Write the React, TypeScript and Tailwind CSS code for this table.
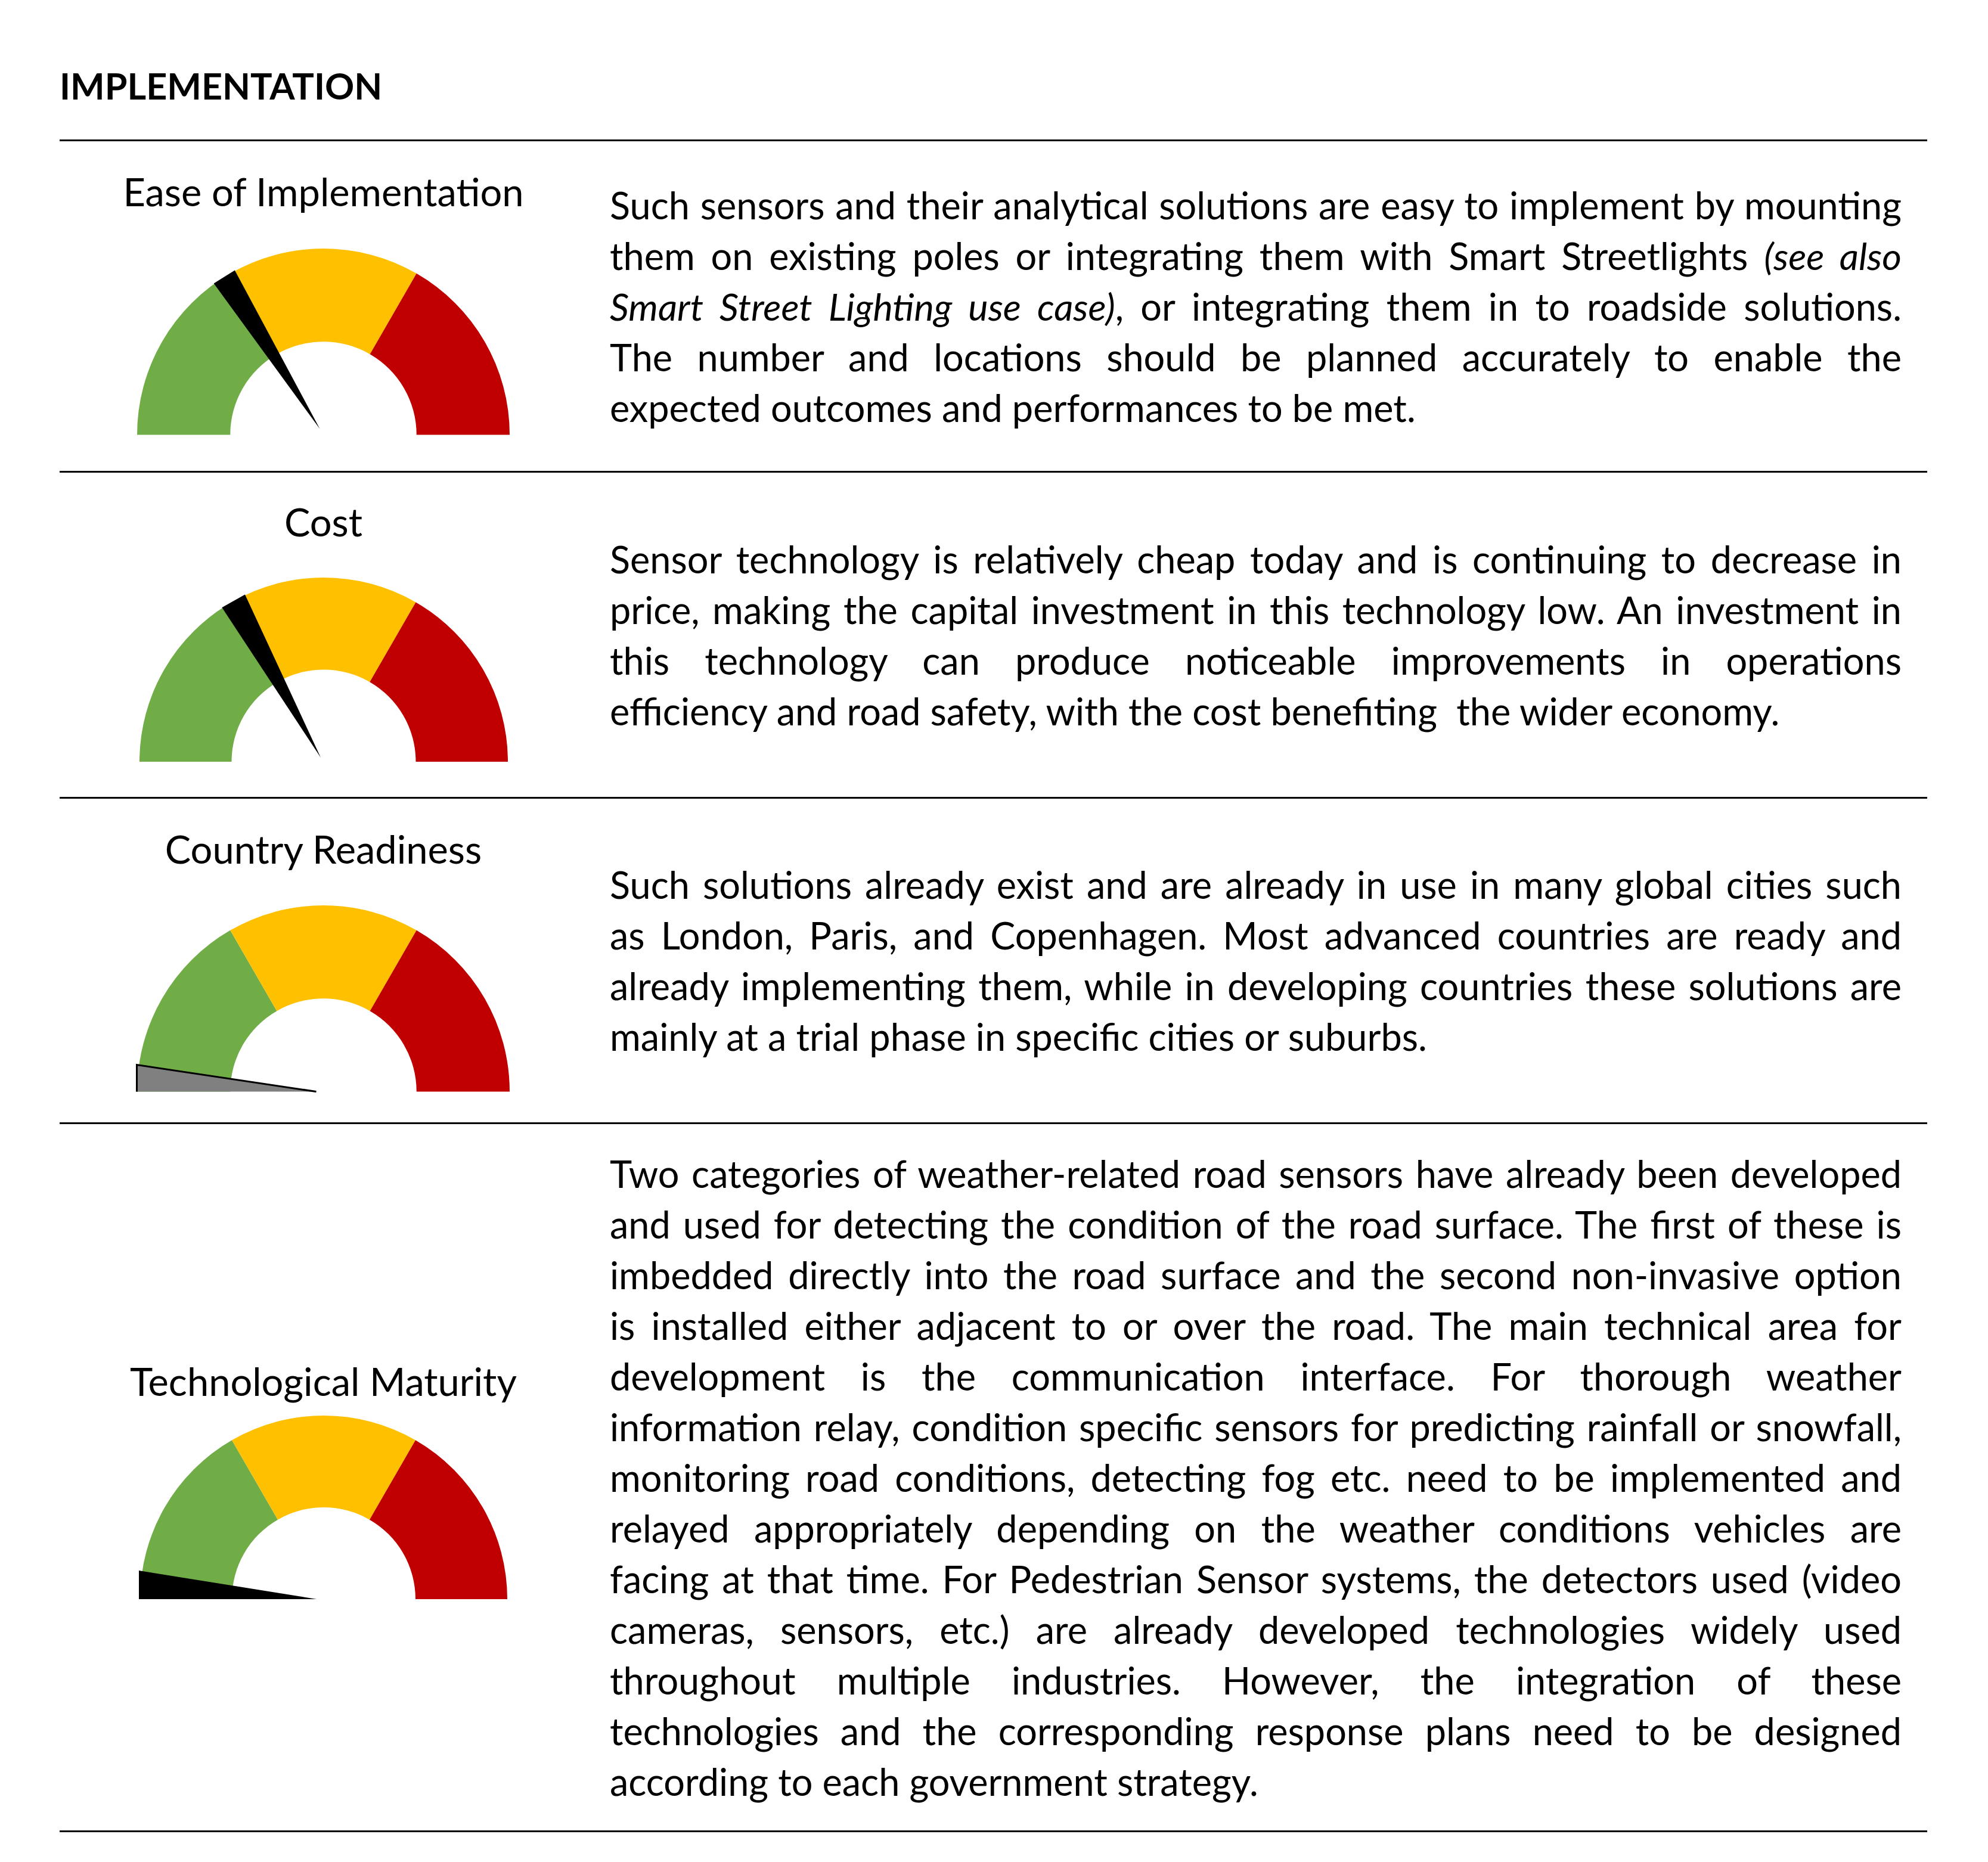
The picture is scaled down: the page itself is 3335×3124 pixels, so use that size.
import React from "react";

type Needle =
  | { kind: "pointer"; a1: number; a2: number; tx: number; ty: number }
  | { kind: "wedge"; h: number; fill: string; stroke?: string };

function pt(cx: number, cy: number, r: number, deg: number): [number, number] {
  const a = (deg * Math.PI) / 180;
  return [cx + r * Math.cos(a), cy - r * Math.sin(a)];
}

function seg(cx: number, cy: number, R: number, r: number, a1: number, a2: number) {
  const [x1, y1] = pt(cx, cy, R, a1);
  const [x2, y2] = pt(cx, cy, R, a2);
  const [x3, y3] = pt(cx, cy, r, a2);
  const [x4, y4] = pt(cx, cy, r, a1);
  return `M${x1} ${y1} A${R} ${R} 0 0 1 ${x2} ${y2} L${x3} ${y3} A${r} ${r} 0 0 0 ${x4} ${y4} Z`;
}

function Gauge({ R, needle }: { R: number; needle: Needle }) {
  const cx = R;
  const cy = R;
  const r = R * 0.5;
  let needleEl: React.ReactNode = null;
  if (needle.kind === "pointer") {
    const [bx1, by1] = pt(cx, cy, R + 1, needle.a1);
    const [bx2, by2] = pt(cx, cy, R + 1, needle.a2);
    needleEl = (
      <polygon
        points={`${cx + needle.tx},${cy + needle.ty} ${bx1},${by1} ${bx2},${by2}`}
        fill="#000000"
      />
    );
  } else {
    const lx = -2;
    const tipX = cx - 12;
    needleEl = (
      <g>
        <polygon points={`${lx},${cy} ${lx},${cy - needle.h} ${tipX},${cy}`} fill={needle.fill} />
        {needle.stroke ? (
          <polyline
            points={`${lx + 1.5},${cy} ${lx + 1.5},${cy - needle.h + 1} ${tipX},${cy}`}
            fill="none"
            stroke={needle.stroke}
            strokeWidth={3}
          />
        ) : null}
      </g>
    );
  }
  return (
    <svg
      width={2 * R}
      height={R}
      viewBox={`0 0 ${2 * R} ${R}`}
      overflow="visible"
      className="block"
    >
      <path d={seg(cx, cy, R, r, 180, 120)} fill="#70AD47" />
      <path d={seg(cx, cy, R, r, 120, 60)} fill="#FFC000" />
      <path d={seg(cx, cy, R, r, 60, 0)} fill="#C00000" />
      {needleEl}
    </svg>
  );
}

function JLine({ children }: { children: React.ReactNode }) {
  return <div className="text-justify [text-align-last:justify]">{children}</div>;
}

function LLine({ children }: { children: React.ReactNode }) {
  return <div className="whitespace-pre">{children}</div>;
}

const font = "font-['Lato','Liberation_Sans',sans-serif]";

function Row({
  label,
  gauge,
  left,
  children,
}: {
  label: string;
  gauge: React.ReactNode;
  left: string;
  children: React.ReactNode;
}) {
  return (
    <div className="flex border-b-[3px] border-black">
      <div className={`w-[885px] shrink-0 flex flex-col items-center ${left}`}>
        <div className="text-[65px] leading-[85px] whitespace-nowrap">{label}</div>
        {gauge}
      </div>
      <div className="flex-1 flex flex-col justify-center pl-[38px] pr-[43px] py-[40px] text-[63px] leading-[85px]">
        {children}
      </div>
    </div>
  );
}

export default function App() {
  return (
    <div className={`w-[3335px] min-h-[3124px] bg-white text-black ${font}`}>
      <div className="pl-[100px] pr-[102px] pt-[101px]">
        <div className="font-bold text-[61px] leading-[85px]">IMPLEMENTATION</div>
        <div className="mt-[48px] border-t-[3px] border-black">
          <Row
            label="Ease of Implementation"
            left="pt-[42px] pb-[60px] gap-[53px]"
            gauge={<Gauge R={312.5} needle={{ kind: "pointer", a1: 118.3, a2: 125.9, tx: -6, ty: -10 }} />}
          >
            <JLine>Such sensors and their analytical solutions are easy to implement by mounting</JLine>
            <JLine>
              them on existing poles or integrating them with Smart Streetlights <em>(see also</em>
            </JLine>
            <JLine>
              <em>Smart Street Lighting use case)</em>, or integrating them in to roadside solutions.
            </JLine>
            <JLine>The number and locations should be planned accurately to enable the</JLine>
            <LLine>expected outcomes and performances to be met.</LLine>
          </Row>
          <Row
            label="Cost"
            left="pt-[40px] pb-[59px] gap-[51px]"
            gauge={<Gauge R={309} needle={{ kind: "pointer", a1: 115.2, a2: 123.4, tx: -5, ty: -7 }} />}
          >
            <JLine>Sensor technology is relatively cheap today and is continuing to decrease in</JLine>
            <JLine>price, making the capital investment in this technology low. An investment in</JLine>
            <JLine>this technology can produce noticeable improvements in operations</JLine>
            <LLine>efficiency and road safety, with the cost benefiting  the wider economy.</LLine>
          </Row>
          <Row
            label="Country Readiness"
            left="pt-[42px] pb-[52px] gap-[52px]"
            gauge={<Gauge R={312.5} needle={{ kind: "wedge", h: 46, fill: "#808080", stroke: "#000000" }} />}
          >
            <JLine>Such solutions already exist and are already in use in many global cities such</JLine>
            <JLine>as London, Paris, and Copenhagen. Most advanced countries are ready and</JLine>
            <JLine>already implementing them, while in developing countries these solutions are</JLine>
            <LLine>mainly at a trial phase in specific cities or suburbs.</LLine>
          </Row>
          <Row
            label="Technological Maturity"
            left="justify-center gap-[15px]"
            gauge={<Gauge R={308} needle={{ kind: "wedge", h: 48, fill: "#000000" }} />}
          >
            <JLine>Two categories of weather-related road sensors have already been developed</JLine>
            <JLine>and used for detecting the condition of the road surface. The first of these is</JLine>
            <JLine>imbedded directly into the road surface and the second non-invasive option</JLine>
            <JLine>is installed either adjacent to or over the road. The main technical area for</JLine>
            <JLine>development is the communication interface. For thorough weather</JLine>
            <JLine>information relay, condition specific sensors for predicting rainfall or snowfall,</JLine>
            <JLine>monitoring road conditions, detecting fog etc. need to be implemented and</JLine>
            <JLine>relayed appropriately depending on the weather conditions vehicles are</JLine>
            <JLine>facing at that time. For Pedestrian Sensor systems, the detectors used (video</JLine>
            <JLine>cameras, sensors, etc.) are already developed technologies widely used</JLine>
            <JLine>throughout multiple industries. However, the integration of these</JLine>
            <JLine>technologies and the corresponding response plans need to be designed</JLine>
            <LLine>according to each government strategy.</LLine>
          </Row>
        </div>
      </div>
    </div>
  );
}
